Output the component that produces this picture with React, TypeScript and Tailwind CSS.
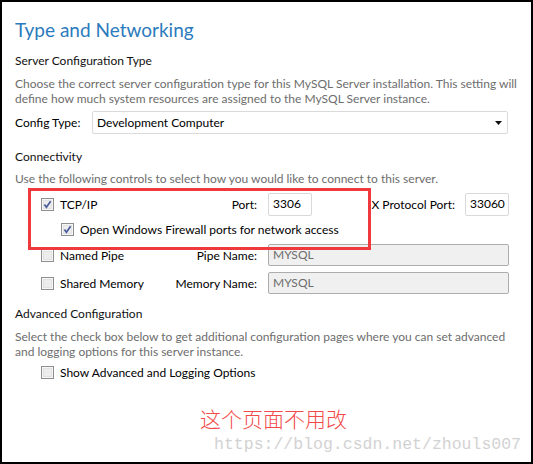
import React from 'react';

const ui = { fontFamily: 'Lato, "Open Sans", sans-serif' };

const CheckBox = ({ checked }: { checked?: boolean }) => (
  <svg width="13" height="13" viewBox="0 0 13 13" className="shrink-0">
    <rect x="0.5" y="0.5" width="12" height="12" fill="#f6f6f6" stroke="#8e8f8f" />
    <rect x="2" y="2" width="9" height="9" fill="#e2e2e2" />
    <rect x="3" y="3" width="7" height="7" fill="#ededed" />
    {checked && (
      <path d="M3.4 6.6 L5.4 9.2 L9.6 3.2" stroke="#4a5b9c" strokeWidth="1.7" fill="none" />
    )}
  </svg>
);

const TextBox = ({ value, className, disabled }: { value: string; className: string; disabled?: boolean }) => (
  <div
    className={
      disabled
        ? `h-[22px] rounded-[2px] border border-[#adadad] bg-[#f0f0f0] pl-[4px] pt-[2px] text-[12px] leading-[15px] text-[#6d6d6d] ${className}`
        : `h-[23px] rounded-[2px] border border-[#d9d9d9] bg-white pl-[4px] pt-[2px] text-[12px] leading-[15px] text-black ${className}`
    }
  >
    {value}
  </div>
);

export default function App() {
  return (
    <div className="relative h-[464px] w-[533px] overflow-hidden border-2 border-black bg-white" style={ui}>
      <div className="pl-[13px]">
        <h1 className="mt-[16px] text-[19px] leading-[24px] text-[#2b7bbd]">Type and Networking</h1>

        <p className="mt-[11px] text-[12px] leading-[15px] text-[#111]">Server Configuration Type</p>
        <p className="mt-[8px] w-[506px] text-[12px] leading-[15px] text-[#6d6d6d]">
          Choose the correct server configuration type for this MySQL Server installation. This setting will define how
          much system resources are assigned to the MySQL Server instance.
        </p>

        <div className="mt-[5px] flex h-[23px] w-[493px] items-center text-[12px] leading-[15px]">
          <span className="w-[77px] text-black">Config Type:</span>
          <div className="flex h-[23px] flex-1 items-center justify-between rounded-[2px] border border-[#dadada] bg-white pl-[4px] pr-[5px]">
            <span className="text-black">Development Computer</span>
            <svg width="7" height="4" viewBox="0 0 7 4">
              <path d="M0 0 H7 L3.5 4 Z" fill="#111" />
            </svg>
          </div>
        </div>

        <p className="mt-[15px] text-[12px] leading-[15px] text-[#111]">Connectivity</p>
        <p className="mt-[7px] text-[12px] leading-[15px] text-[#6d6d6d]">
          Use the following controls to select how you would like to connect to this server.
        </p>

        <div className="w-[494px] text-[12px] leading-[15px] text-black">
          <div className="mt-[7px] flex h-[23px] items-center pl-[26px]">
            <div className="flex w-[216px] items-center">
              <CheckBox checked />
              <span className="ml-[6px]">TCP/IP</span>
              <span className="ml-auto">Port:</span>
            </div>
            <TextBox value="3306" className="ml-[11px] w-[44px]" />
            <span className="ml-auto">X Protocol Port:</span>
            <TextBox value="33060" className="ml-[10px] w-[44px]" />
          </div>

          <div className="mt-[6px] flex h-[15px] items-center pl-[46px]">
            <CheckBox checked />
            <span className="ml-[6px]">Open Windows Firewall ports for network access</span>
          </div>

          <div className="mt-[7px] flex h-[22px] items-center pl-[26px]">
            <div className="flex w-[216px] items-center">
              <CheckBox />
              <span className="ml-[6px]">Named Pipe</span>
              <span className="ml-auto">Pipe Name:</span>
            </div>
            <TextBox value="MYSQL" className="ml-[11px] flex-1" disabled />
          </div>

          <div className="mt-[6px] flex h-[22px] items-center pl-[26px]">
            <div className="flex w-[216px] items-center">
              <CheckBox />
              <span className="ml-[6px]">Shared Memory</span>
              <span className="ml-auto">Memory Name:</span>
            </div>
            <TextBox value="MYSQL" className="ml-[11px] flex-1" disabled />
          </div>
        </div>

        <p className="mt-[12px] text-[12px] leading-[15px] text-[#111]">Advanced Configuration</p>
        <p className="mt-[8px] w-[506px] text-[12px] leading-[15px] text-[#6d6d6d]">
          Select the check box below to get additional configuration pages where you can set advanced and logging
          options for this server instance.
        </p>
        <div className="mt-[6px] flex h-[15px] items-center pl-[26px] text-[12px] leading-[15px] text-black">
          <CheckBox />
          <span className="ml-[6px]">Show Advanced and Logging Options</span>
        </div>

        <p
          className="mt-[26px] pl-[185px] text-[21px] leading-[24px] text-[#f24a4a]"
          style={{ fontFamily: '"Noto Sans CJK SC", sans-serif', fontWeight: 300 }}
        >
          这个页面不用改
        </p>
      </div>

      <p
        className="mt-[5px] pr-[10px] text-right text-[16.5px] leading-[20px] text-[#d2d2d2]"
        style={{ fontFamily: '"Liberation Mono", monospace' }}
      >
        https://blog.csdn.net/zhouls007
      </p>

      <div className="pointer-events-none absolute left-[26px] top-[186px] h-[62px] w-[343px] border-[3px] border-[#f0393d]" />
    </div>
  );
}
